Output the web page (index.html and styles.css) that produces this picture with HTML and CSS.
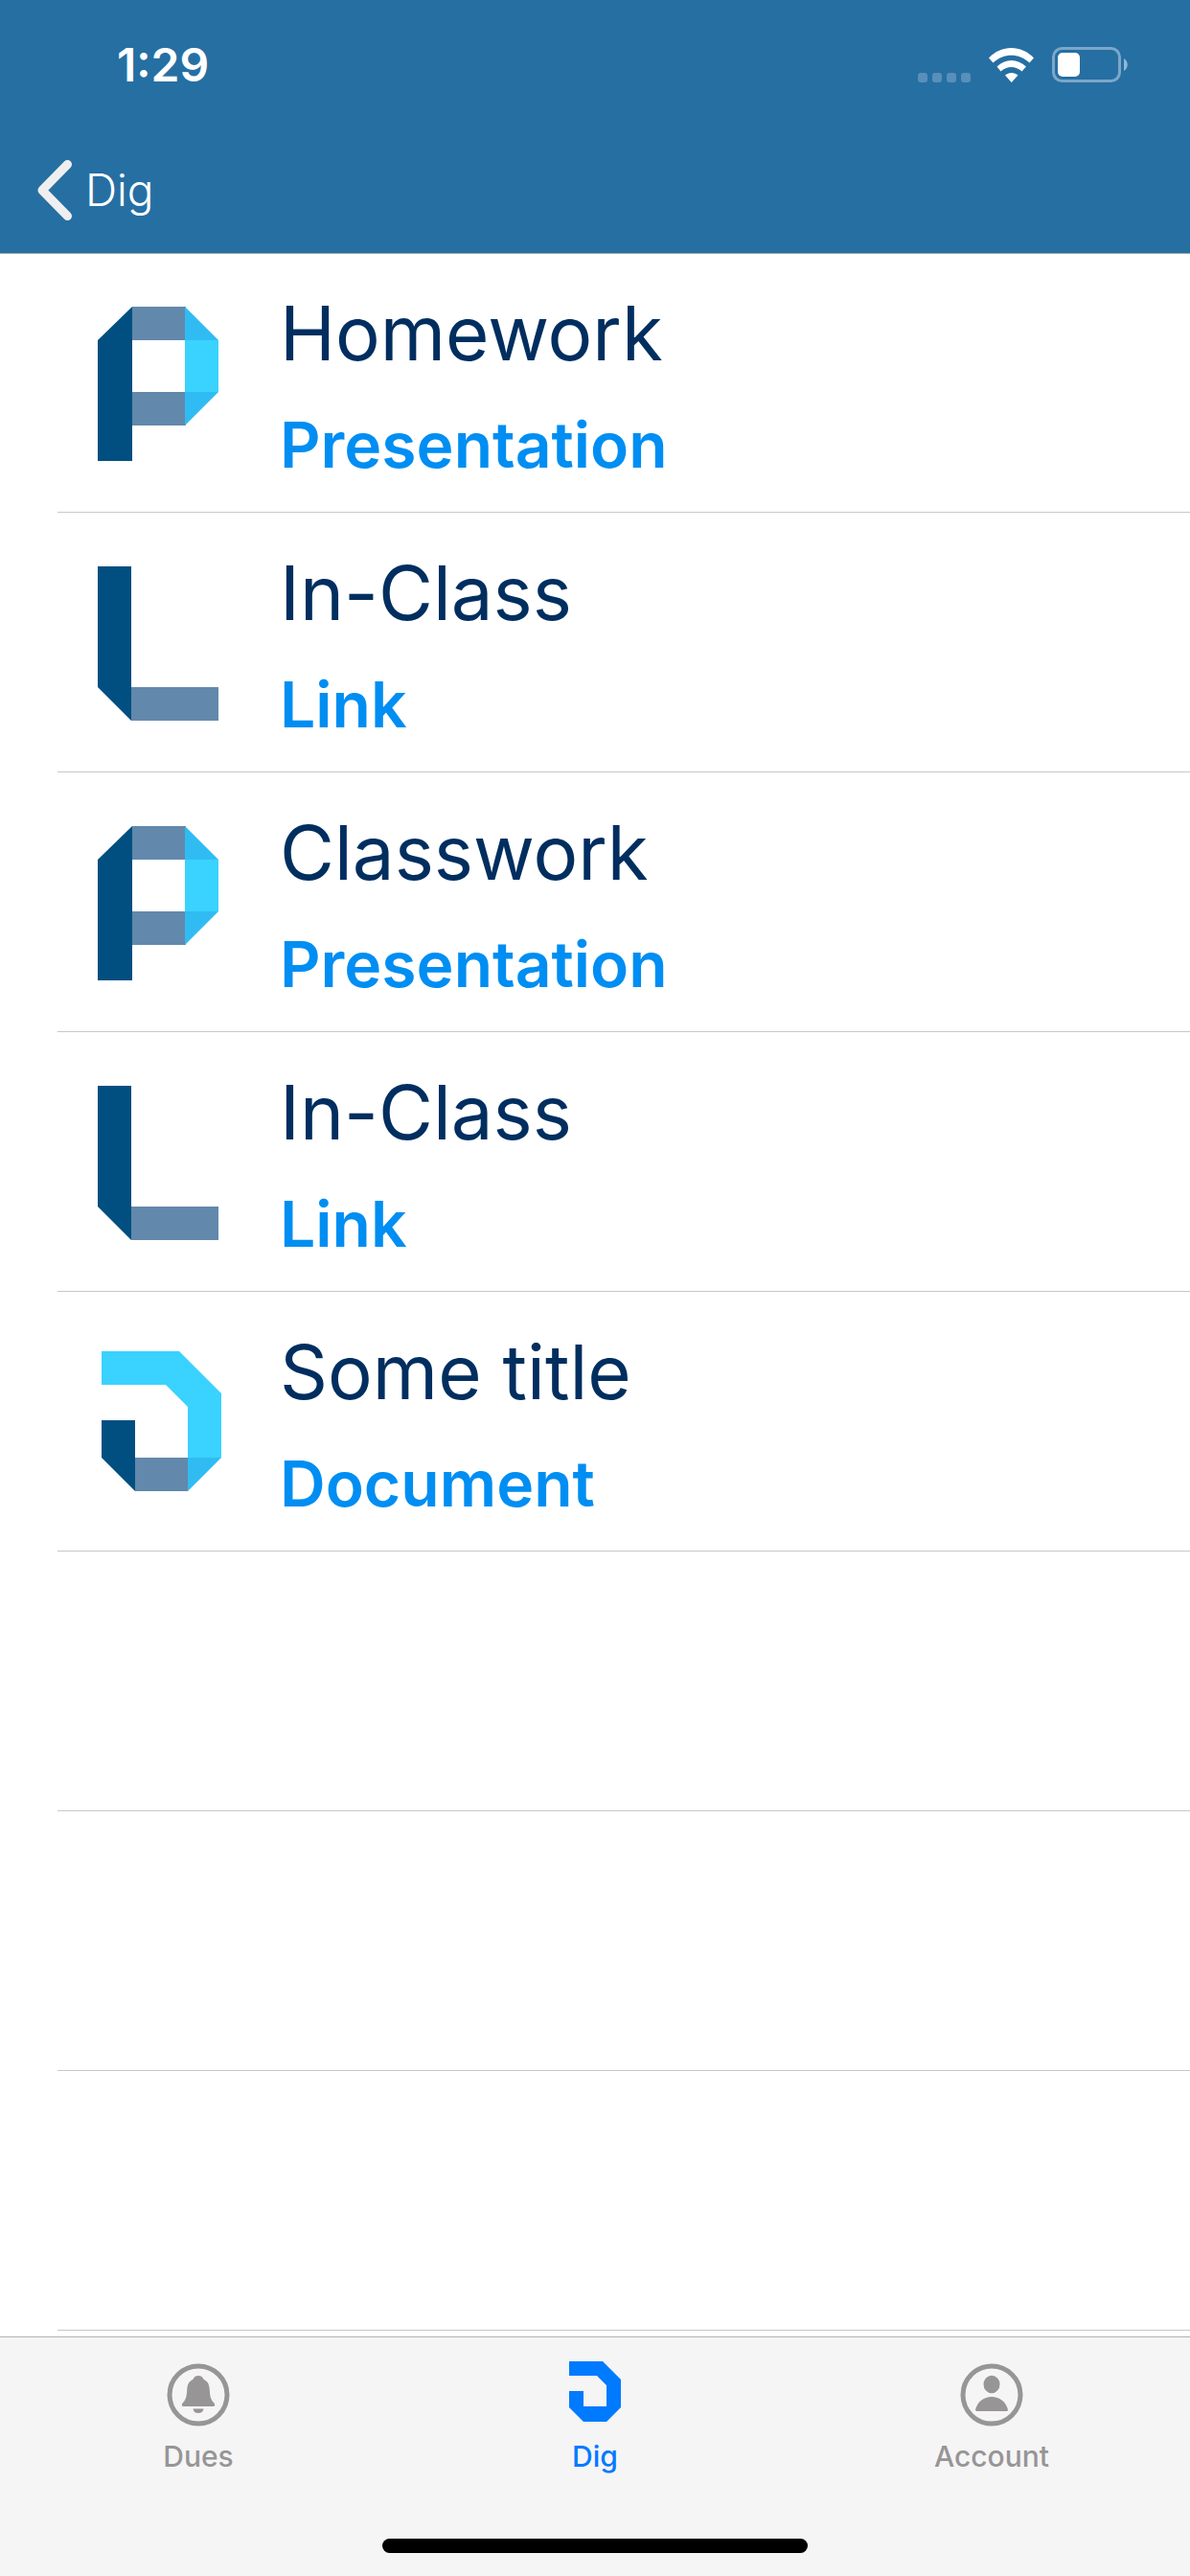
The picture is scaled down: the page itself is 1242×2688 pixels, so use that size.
FILE: index.html
```html
<!DOCTYPE html>
<html lang="en">
<head>
<meta charset="utf-8">
<meta name="viewport" content="width=device-width, initial-scale=1">
<title>Dig</title>
<link rel="stylesheet" href="styles.css">
</head>
<body>
<svg class="defs" aria-hidden="true">
  <symbol id="letter-p" viewBox="0 0 130 162">
    <path fill="#6288ac" d="M36 0h56v35H36zM36 89h56v35H36z"/>
    <path fill="#004f80" d="M0 35 36 0v161H0z"/>
    <path fill="#3ad2ff" d="M91 35h35v54H91z"/>
    <path fill="#30bcf2" d="M91 0l35 35H91zM91 89h35l-35 35z"/>
  </symbol>
  <symbol id="letter-l" viewBox="0 0 130 162">
    <path fill="#6288ac" d="M35 126h91v35H35z"/>
    <path fill="#004f80" d="M0 0h35v161L0 126z"/>
  </symbol>
  <symbol id="letter-d" viewBox="0 0 130 162">
    <path fill="#3ad2ff" d="M4 6h81l44 44v67H94V64L71 41H4z"/>
    <path fill="#004f80" d="M4 78h35v74L4 117z"/>
    <path fill="#6288ac" d="M39 117h55v35H39z"/>
    <path fill="#30bcf2" d="M94 117h35l-35 35z"/>
  </symbol>
</svg>

<header class="header">
  <div class="status">
    <span class="time">1:29</span>
    <div class="indicators">
      <svg width="55" height="36" viewBox="0 0 55 36" fill="#5890ba" aria-hidden="true">
        <rect y="26" width="10" height="10" rx="3"/><rect x="15" y="26" width="10" height="10" rx="3"/><rect x="30" y="26" width="10" height="10" rx="3"/><rect x="45" y="26" width="10" height="10" rx="3"/>
      </svg>
      <svg width="47" height="36" viewBox="0 0 47 36" fill="#fff" aria-hidden="true">
        <path d="M0 10.500C13-3.500 34-3.500 47 10.500L42.500 15.500C31.500 5 15.500 5 4.500 15.500z"/>
        <path d="M8.500 19.500C17 10.700 30 10.700 39 19.500L34.500 24.500C28 18.500 19 18.500 12.500 24.500z"/>
        <path d="M17 28.500C20.500 25 27 25 30.500 28.500L23.700 36z"/>
      </svg>
      <svg width="79" height="37" viewBox="0 0 79 37" aria-hidden="true">
        <rect x="1.500" y="1.500" width="69" height="34" rx="9" fill="none" stroke="#7ca7c8" stroke-width="3"/>
        <rect x="6" y="6" width="23" height="25" rx="5" fill="#fff"/>
        <path fill="#93b7d2" d="M75 12c5 3 5 10 0 13z"/>
      </svg>
    </div>
  </div>
  <nav class="nav">
    <a class="back" href="#dig">
      <svg width="36" height="63" viewBox="0 0 36 63" aria-hidden="true"><path d="M31.500 4.500 5 31.500l26.500 27" fill="none" stroke="#efeff0" stroke-width="9" stroke-linecap="round" stroke-linejoin="round"/></svg>
      <span>Dig</span>
    </a>
  </nav>
</header>

<main class="content">
  <ul class="list">
    <li class="row"><a class="item" href="#1"><svg class="letter" aria-hidden="true"><use href="#letter-p"/></svg><span class="text"><span class="title">Homework</span><span class="kind">Presentation</span></span></a></li>
    <li class="row"><a class="item" href="#2"><svg class="letter" aria-hidden="true"><use href="#letter-l"/></svg><span class="text"><span class="title">In-Class</span><span class="kind">Link</span></span></a></li>
    <li class="row"><a class="item" href="#3"><svg class="letter" aria-hidden="true"><use href="#letter-p"/></svg><span class="text"><span class="title">Classwork</span><span class="kind">Presentation</span></span></a></li>
    <li class="row"><a class="item" href="#4"><svg class="letter" aria-hidden="true"><use href="#letter-l"/></svg><span class="text"><span class="title">In-Class</span><span class="kind">Link</span></span></a></li>
    <li class="row"><a class="item" href="#5"><svg class="letter" aria-hidden="true"><use href="#letter-d"/></svg><span class="text"><span class="title">Some title</span><span class="kind">Document</span></span></a></li>
    <li class="row"></li>
    <li class="row"></li>
    <li class="row"></li>
  </ul>
</main>

<footer class="footer">
  <nav class="tabs">
    <a class="tab" href="#dues">
      <svg width="66" height="66" viewBox="0 0 66 66" aria-hidden="true">
        <g transform="translate(0 1)">
        <circle cx="33" cy="34" r="30" fill="none" stroke="currentColor" stroke-width="5"/>
        <path fill="currentColor" d="M33 14c-3 0-4.500 1.500-5.500 3.800C23 20 21.500 23.500 21.200 29c-.4 7-1.200 9.500-3.700 12.500-1.200 1.300-1.700 2-1.700 3 0 .9.700 1.500 1.700 1.500h31c1 0 1.700-.6 1.700-1.500 0-1-.5-1.700-1.700-3-2.500-3-3.300-5.500-3.700-12.500-.3-5.500-1.800-9-6.300-11.200C37.500 15.500 36 14 33 14zM27.500 48.500h11c-.5 3-2.500 4.500-5.500 4.500s-5-1.500-5.500-4.500z"/>
        </g>
      </svg>
      <span>Dues</span>
    </a>
    <a class="tab active" href="#dig" aria-current="page">
      <svg width="66" height="66" viewBox="0 0 66 66" aria-hidden="true">
        <path fill="currentColor" d="M6 0h35l19 19v29L45 63H21L6 48V31h15v16h24V25L35 15H6z"/>
      </svg>
      <span>Dig</span>
    </a>
    <a class="tab" href="#account">
      <svg width="66" height="66" viewBox="0 0 66 66" aria-hidden="true">
        <g transform="translate(0 1)">
        <circle cx="33" cy="34" r="30" fill="none" stroke="currentColor" stroke-width="5"/>
        <ellipse cx="33" cy="23" rx="8.500" ry="9.300" fill="currentColor"/>
        <path fill="currentColor" d="M17.500 51c-1.200 0-1.700-.8-1.400-2C18.500 41 25 36 33 36s14.500 5 16.900 13c.3 1.200-.2 2-1.400 2z"/>
        </g>
      </svg>
      <span>Account</span>
    </a>
  </nav>
  <div class="home-bar"></div>
</footer>
</body>
</html>
```

FILE: styles.css
```css
* {
  box-sizing: border-box;
}

body {
  margin: 0;
  min-height: 100vh;
  display: flex;
  flex-direction: column;
  background: #fff;
  font-family: Inter, "Liberation Sans", sans-serif;
}

a {
  color: inherit;
  text-decoration: none;
}

svg {
  display: block;
  flex: none;
  overflow: visible;
}

.defs {
  display: none;
}

.header {
  background: #266fa3;
  color: #fff;
  box-shadow: 0 1px 0 #a7a9ac;
}

.status {
  height: 132px;
  padding: 3px 65px 0 122px;
  display: flex;
  align-items: center;
  justify-content: space-between;
}

.time {
  font-size: 48px;
  line-height: 60px;
  font-weight: 600;
}

.indicators {
  display: flex;
  align-items: center;
  gap: 19px;
}

.nav {
  height: 132px;
  padding: 0 39px;
  display: flex;
  align-items: center;
}

.back {
  display: flex;
  align-items: center;
  gap: 14px;
  font-weight: 300;
  font-size: 46px;
  line-height: 60px;
}

.content {
  flex: 1;
}

.list {
  margin: 0;
  padding: 0 0 0 60px;
  list-style: none;
}

.row {
  height: 271px;
  border-bottom: 1px solid #c8c8ca;
}

.item {
  height: 100%;
  padding: 3px 0 0 42px;
  display: flex;
  align-items: center;
  gap: 60px;
}

.letter {
  width: 130px;
  height: 162px;
}

.text {
  padding-top: 10px;
  display: flex;
  flex-direction: column;
  gap: 16px;
}

.title {
  color: #002e5f;
  font-size: 78px;
  line-height: 100px;
}

.kind {
  color: #008ef2;
  font-size: 66px;
  line-height: 100px;
  font-weight: 600;
}

.footer {
  padding: 25px 0 24px;
  border-top: 1px solid #b2b2b2;
  background: #f5f5f5;
}

.tabs {
  display: grid;
  grid-template-columns: repeat(3, 1fr);
  margin-bottom: 66px;
}

.tab {
  display: flex;
  flex-direction: column;
  align-items: center;
  gap: 13px;
  color: #979596;
  font-size: 30px;
  line-height: 40px;
  font-weight: 500;
}

.active {
  color: #007aff;
}

.home-bar {
  width: 444px;
  height: 15px;
  margin: 0 auto;
  border-radius: 8px;
  background: #000;
}
```
